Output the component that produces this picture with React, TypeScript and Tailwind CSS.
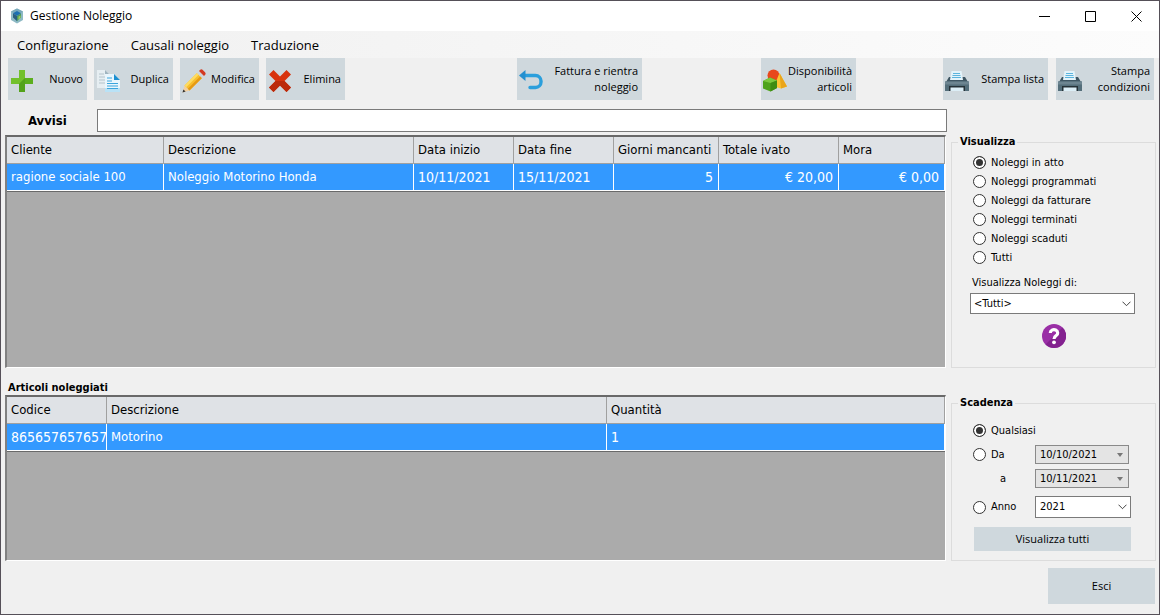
import { useState } from "react";
import type { ReactNode } from "react";

const rentalFilters = [
  "Noleggi in atto",
  "Noleggi programmati",
  "Noleggi da fatturare",
  "Noleggi terminati",
  "Noleggi scaduti",
  "Tutti",
];

const LogoIcon = () => (
  <svg viewBox="0 0 16 16" className="h-4 w-4">
    <path d="M8 0.5 14 3.5v8.5L8 15.5 2 12V3.5z" fill="#8db9c4" />
    <path d="M8 0.5 14 3.5 8 7 2 3.5z" fill="#78a9ba" />
    <path d="M8 3 12 5.2 8 8 4 5.2z" fill="#1c6fb0" />
    <path d="M4 5.2 8 8v5.2L4 9.6z" fill="#2a5f7f" />
    <path d="M8 8l4-2.8v4L8 13.2z" fill="#4d9a5a" />
    <path d="M9.5 8.5l2-1v2.4l-2 1.6z" fill="#a3c95b" />
  </svg>
);

const PlusIcon = () => (
  <svg viewBox="0 0 24 24" className="h-6 w-6 shrink-0">
    <path d="M9 1h6v8h8v6h-8v8H9v-8H1V9h8z" fill="#5cae1e" />
    <path d="M9 1h6v8L9 15H1V9h8z" fill="#72c02c" />
    <path d="M9 15l6-6v14H9z" fill="#4d9a18" opacity="0.6" />
  </svg>
);

const CopyIcon = () => (
  <svg viewBox="0 0 24 24" className="h-6 w-6 shrink-0">
    <path d="M1 1h8l5 5v13H1z" fill="#e6eef2" />
    <path d="M9 1l5 5H9z" fill="#9fb4bf" />
    <path d="M3 5h5M3 8h8M3 11h8M3 14h8" stroke="#b4c4cc" />
    <path d="M9 5h9l6 6v12H9z" fill="#e9f6fd" />
    <path d="M9 19h15v4H9z" fill="#b9e2f6" />
    <path d="M18 5l6 6h-6z" fill="#1c8fd0" />
    <path d="M11 9h5M11 12h5M11 14.500h11M11 17h11M11 19.500h11" stroke="#39a5dd" />
  </svg>
);

const PencilIcon = () => (
  <svg viewBox="0 0 24 24" className="h-6 w-6 shrink-0">
    <path d="M0.500 23.500 2.500 16.500 7.500 21.500z" fill="#f3cf9e" />
    <path d="M0.500 23.500 1.400 20.500 3.600 22.600z" fill="#333" />
    <path d="M2.500 16.500 15 4l5 5L7.500 21.500z" fill="#f9bf2c" />
    <path d="M2.500 16.500 15 4l1.700 1.700L4.200 18.200z" fill="#fddc62" />
    <path d="M5.800 19.800 18.300 7.300 20 9 7.500 21.500z" fill="#e59a15" />
    <path d="M15 4l2-2 5 5-2 2z" fill="#cfd5da" />
    <path d="M17 2 18.200 0.800Q19.500-.2 20.800 1L23 3.200Q24.200 4.500 23.200 5.800L22 7z" fill="#d33a22" />
  </svg>
);

const CrossIcon = () => (
  <svg viewBox="0 0 24 24" className="h-6 w-6 shrink-0">
    <path
      d="M5.500 1 12 7.500 18.500 1 23 5.500 16.500 12 23 18.500 18.500 23 12 16.500 5.500 23 1 18.500 7.500 12 1 5.500z"
      fill="#d8330d"
    />
    <path
      d="M7.500 12 1 18.500 5.500 23 12 16.500 18.500 23 23 18.500 16.500 12z"
      fill="#bb2a0b"
    />
  </svg>
);

const ReturnIcon = () => (
  <svg viewBox="0 0 24 24" className="h-6 w-6 shrink-0">
    <path
      d="M5 6.500h11.500a5.500 5.500 0 0 1 5.500 5.500v1a5.500 5.500 0 0 1-5.500 5.500H11"
      fill="none"
      stroke="#2b9fdc"
      strokeWidth="3.400"
      strokeLinecap="round"
    />
    <path d="M0 6.500 6.500 1v11z" fill="#2490d0" />
  </svg>
);

const ShapesIcon = () => (
  <svg viewBox="0 0 24 24" className="h-6 w-6 shrink-0">
    <circle cx="10.500" cy="6.500" r="6" fill="#e8481c" />
    <path d="M16.500 4 24 17.500l-6 2-7-2z" fill="#fcc532" />
    <path d="M16.500 4 24 17.500l-6 2z" fill="#eaa51a" />
    <path d="M7 8.500 14 11.500v7.500L7.500 22.500 0 19.500V12z" fill="#4fa31c" />
    <path d="M7 8.500 14 11.500 7.500 14 0 12z" fill="#7cc93f" />
    <path d="M7.500 14 14 11.500v7.500l-6.500 3.500z" fill="#3d8c12" />
  </svg>
);

const PrinterIcon = () => (
  <svg viewBox="0 0 24 24" className="h-6 w-6 shrink-0">
    <path d="M4 8h16l3 5H1z" fill="#3f5663" />
    <path d="M6.500 2h10L18 11H5z" fill="#e3f3fa" />
    <path d="M8 4.500h7M7.500 6.500h8M7 8.500h9" stroke="#5bb4dd" />
    <path d="M0 12.500h24V22H0z" fill="#546e7a" />
    <path d="M0 12.500h24v3H0z" fill="#6d8591" />
    <path d="M4 17h16v5H4z" fill="#263238" />
    <path d="M5.500 18.500h13V22h-13z" fill="#dceef6" />
  </svg>
);

const HelpIcon = () => (
  <svg viewBox="0 0 24 24" className="h-6 w-6">
    <circle cx="12" cy="12" r="12" fill="#9a2fa6" />
    <path d="M12 24A12 12 0 0 0 20.500 3.500L3.500 20.500A12 12 0 0 0 12 24z" fill="#83228f" />
    <path
      d="M8.300 9a3.700 3.300 0 1 1 5.800 2.700C12.600 12.700 12 13.200 12 15"
      fill="none"
      stroke="#fff"
      strokeWidth="3.200"
    />
    <circle cx="12" cy="18.300" r="1.900" fill="#fff" />
  </svg>
);

type ToolButtonProps = { icon: ReactNode; className: string; children: ReactNode };

const ToolButton = ({ icon, className, children }: ToolButtonProps) => (
  <button
    type="button"
    className={`flex h-[42px] shrink-0 items-center justify-between bg-[#cfd8dd] pr-1 pl-[2px] text-right font-['Open_Sans',sans-serif] text-[11px] leading-4 ${className}`}
  >
    <span className="shrink-0 pt-1">{icon}</span>
    <span>{children}</span>
  </button>
);

type GridProps = { widths: string[]; headers: string[]; cells: string[]; rightFrom?: number };

const DataGrid = ({ widths, headers, cells, rightFrom = 99 }: GridProps) => (
  <div className="mr-px flex-1 border-t-2 border-r border-b border-l-2 border-t-[#696969] border-r-white border-b-white border-l-[#808080] bg-[#ababab]">
    <table className="w-full table-fixed border-separate border-spacing-0 border-b border-[#696969] text-[13px] leading-5">
      <colgroup>
        {widths.map((width, i) => (
          <col key={i} className={width} />
        ))}
      </colgroup>
      <thead>
        <tr className="h-[27px] bg-[#dfe2e6]">
          {headers.map((header) => (
            <th
              key={header}
              className="overflow-hidden border-r border-b border-[#a0a0a0] p-0 pl-1 text-left font-normal whitespace-nowrap"
            >
              {header}
            </th>
          ))}
        </tr>
      </thead>
      <tbody>
        <tr className="h-[27px] bg-[#3399ff] text-white">
          {cells.map((cell, i) => (
            <td
              key={i}
              className={`overflow-hidden border-r border-b border-white p-0 whitespace-nowrap ${
                i >= rightFrom ? "pr-[5px] text-right" : "pl-1"
              } ${/^[\d€]/.test(cell) ? "text-sm" : ""}`}
            >
              {cell}
            </td>
          ))}
        </tr>
      </tbody>
    </table>
  </div>
);

type RadioProps = { name: string; label: string; checked: boolean; onChange: () => void };

const Radio = ({ name, label, checked, onChange }: RadioProps) => (
  <label className="flex h-[19px] items-center gap-[5px]">
    <input
      type="radio"
      name={name}
      checked={checked}
      onChange={onChange}
      className="h-[13px] w-[13px] appearance-none rounded-full border border-[#333] bg-white checked:bg-[#333] checked:shadow-[inset_0_0_0_2px_white]"
    />
    {label}
  </label>
);

const Chevron = () => (
  <svg
    viewBox="0 0 9 6"
    className="pointer-events-none absolute top-1/2 right-1 h-[6px] w-[9px] -translate-y-1/2"
  >
    <path d="M0.500 0.700 4.500 4.700 8.500 0.700" fill="none" stroke="#444" />
  </svg>
);

const DateBox = ({ label, value }: { label: string; value: string }) => (
  <div className="relative w-[94px]">
    <input
      type="text"
      aria-label={label}
      defaultValue={value}
      disabled
      className="block h-[19px] w-full border border-[#8a8a8a] bg-[#e4e4e4] pl-1 text-black"
    />
    <svg
      viewBox="0 0 6 4"
      className="pointer-events-none absolute top-1/2 right-[6px] h-1 w-[6px] -translate-y-1/2"
    >
      <path d="M0 0h6L3 4z" fill="#777" />
    </svg>
  </div>
);

export default function App() {
  const [filter, setFilter] = useState(rentalFilters[0]);
  const [expiry, setExpiry] = useState("Qualsiasi");

  return (
    <div className="flex min-h-screen flex-col border border-[#555058] bg-[#f0f0f0] font-['DejaVu_Sans_Condensed','DejaVu_Sans',sans-serif] text-[11px] leading-4 text-black">
      <header className="flex h-[30px] items-center bg-white pl-2 font-['Open_Sans',sans-serif] text-xs">
        <LogoIcon />
        <h1 className="ml-[5px] flex-1">Gestione Noleggio</h1>
        <button type="button" aria-label="Minimize" className="flex h-full w-[46px] items-center justify-center">
          <svg viewBox="0 0 11 11" className="h-[11px] w-[11px]">
            <path d="M0 5.500h11" stroke="#000" />
          </svg>
        </button>
        <button type="button" aria-label="Maximize" className="flex h-full w-[46px] items-center justify-center">
          <svg viewBox="0 0 11 11" className="h-[11px] w-[11px]">
            <path d="M.5.5h10v10H.5z" fill="none" stroke="#000" />
          </svg>
        </button>
        <button type="button" aria-label="Close" className="flex h-full w-[46px] items-center justify-center">
          <svg viewBox="0 0 11 11" className="h-[11px] w-[11px]">
            <path d="M.5.5l10 10M10.500.5l-10 10" stroke="#000" />
          </svg>
        </button>
      </header>

      <nav className="flex h-[27px] items-center gap-[22px] bg-gradient-to-r from-[#f0f0f0] to-[#fcfcfc] pl-4 font-['Open_Sans',sans-serif] text-[13px]">
        <button type="button">Configurazione</button>
        <button type="button">Causali noleggio</button>
        <button type="button">Traduzione</button>
      </nav>

      <div className="flex pr-[5px] pl-[7px]">
        <div className="flex gap-[7px]">
          <ToolButton icon={<PlusIcon />} className="w-[79px]">Nuovo</ToolButton>
          <ToolButton icon={<CopyIcon />} className="w-[79px]">Duplica</ToolButton>
          <ToolButton icon={<PencilIcon />} className="w-[79px]">Modifica</ToolButton>
          <ToolButton icon={<CrossIcon />} className="w-[79px]">Elimina</ToolButton>
        </div>
        <div className="grow-[172]" />
        <ToolButton icon={<ReturnIcon />} className="w-[125px]">
          Fattura e rientra
          <br />
          noleggio
        </ToolButton>
        <div className="grow-[119]" />
        <ToolButton icon={<ShapesIcon />} className="w-[95px]">
          Disponibilità
          <br />
          articoli
        </ToolButton>
        <div className="grow-[87]" />
        <div className="flex gap-2">
          <ToolButton icon={<PrinterIcon />} className="w-[105px]">Stampa lista</ToolButton>
          <ToolButton icon={<PrinterIcon />} className="w-[98px]">
            Stampa
            <br />
            condizioni
          </ToolButton>
        </div>
      </div>

      <main className="flex flex-1 flex-col pr-[3px] pl-1">
        <div className="flex flex-1 gap-1">
          <section className="flex flex-1 flex-col pt-[9px]">
            <div className="mb-[3px] flex items-center">
              <label htmlFor="avvisi" className="w-[92px] pl-[23px] text-[13px] font-bold">
                Avvisi
              </label>
              <input id="avvisi" type="text" className="h-[23px] flex-1 border border-[#7a7a7a] bg-white px-1" />
            </div>
            <DataGrid
              widths={["w-[157px]", "w-[250px]", "w-[100px]", "w-[100px]", "w-[105px]", "w-[120px]", "w-auto"]}
              headers={["Cliente", "Descrizione", "Data inizio", "Data fine", "Giorni mancanti", "Totale ivato", "Mora"]}
              cells={["ragione sociale 100", "Noleggio Motorino Honda", "10/11/2021", "15/11/2021", "5", "€ 20,00", "€ 0,00"]}
              rightFrom={4}
            />
          </section>

          <fieldset className="mt-[34px] w-[205px] border border-[#dcdcdc] pl-[18px]">
            <legend className="-ml-3 px-[2px] font-bold">Visualizza</legend>
            <div className="flex flex-col pt-[3px] pl-[3px]">
              {rentalFilters.map((name) => (
                <Radio
                  key={name}
                  name="filter"
                  label={name}
                  checked={filter === name}
                  onChange={() => setFilter(name)}
                />
              ))}
            </div>
            <label htmlFor="owner" className="mt-2 block pl-[2px]">
              Visualizza Noleggi di:
            </label>
            <div className="relative mt-[2px] w-[165px]">
              <select id="owner" className="block h-[21px] w-full appearance-none border border-[#7a7a7a] bg-white pl-[3px]">
                <option>&lt;Tutti&gt;</option>
              </select>
              <Chevron />
            </div>
            <button type="button" aria-label="Aiuto" className="mt-[10px] mb-[18px] ml-[72px] block">
              <HelpIcon />
            </button>
          </fieldset>
        </div>

        <div className="mt-3 flex gap-1">
          <section className="flex flex-1 flex-col">
            <h2 className="pl-[3px] leading-[15px] font-bold">Articoli noleggiati</h2>
            <DataGrid
              widths={["w-[100px]", "w-[500px]", "w-auto"]}
              headers={["Codice", "Descrizione", "Quantità"]}
              cells={["865657657657", "Motorino", "1"]}
            />
          </section>

          <fieldset className="mt-[15px] w-[205px] border border-[#dcdcdc] pl-[21px]">
            <legend className="-ml-[15px] px-[2px] font-bold">Scadenza</legend>
            <div className="flex flex-col gap-[5px] pt-[10px]">
              <Radio
                name="expiry"
                label="Qualsiasi"
                checked={expiry === "Qualsiasi"}
                onChange={() => setExpiry("Qualsiasi")}
              />
              <div className="flex items-center">
                <div className="w-[62px]">
                  <Radio name="expiry" label="Da" checked={expiry === "Da"} onChange={() => setExpiry("Da")} />
                </div>
                <DateBox label="Da" value="10/10/2021" />
              </div>
              <div className="flex items-center">
                <span className="w-[62px] pl-[27px]">a</span>
                <DateBox label="a" value="10/11/2021" />
              </div>
            </div>
            <div className="mt-2 flex items-center">
              <div className="w-[62px]">
                <Radio name="expiry" label="Anno" checked={expiry === "Anno"} onChange={() => setExpiry("Anno")} />
              </div>
              <div className="relative w-24">
                <select aria-label="Anno" className="block h-[22px] w-full appearance-none border border-[#7a7a7a] bg-white pl-1">
                  <option>2021</option>
                </select>
                <Chevron />
              </div>
            </div>
            <button
              type="button"
              className="my-[9px] ml-px block h-6 w-[157px] bg-[#cfd8dd] font-['Open_Sans',sans-serif]"
            >
              Visualizza tutti
            </button>
          </fieldset>
        </div>
      </main>

      <footer className="flex justify-end pt-[7px] pr-1 pb-[10px]">
        <button type="button" className="h-9 w-[107px] bg-[#cfd8dd] font-['Open_Sans',sans-serif]">
          Esci
        </button>
      </footer>
    </div>
  );
}
